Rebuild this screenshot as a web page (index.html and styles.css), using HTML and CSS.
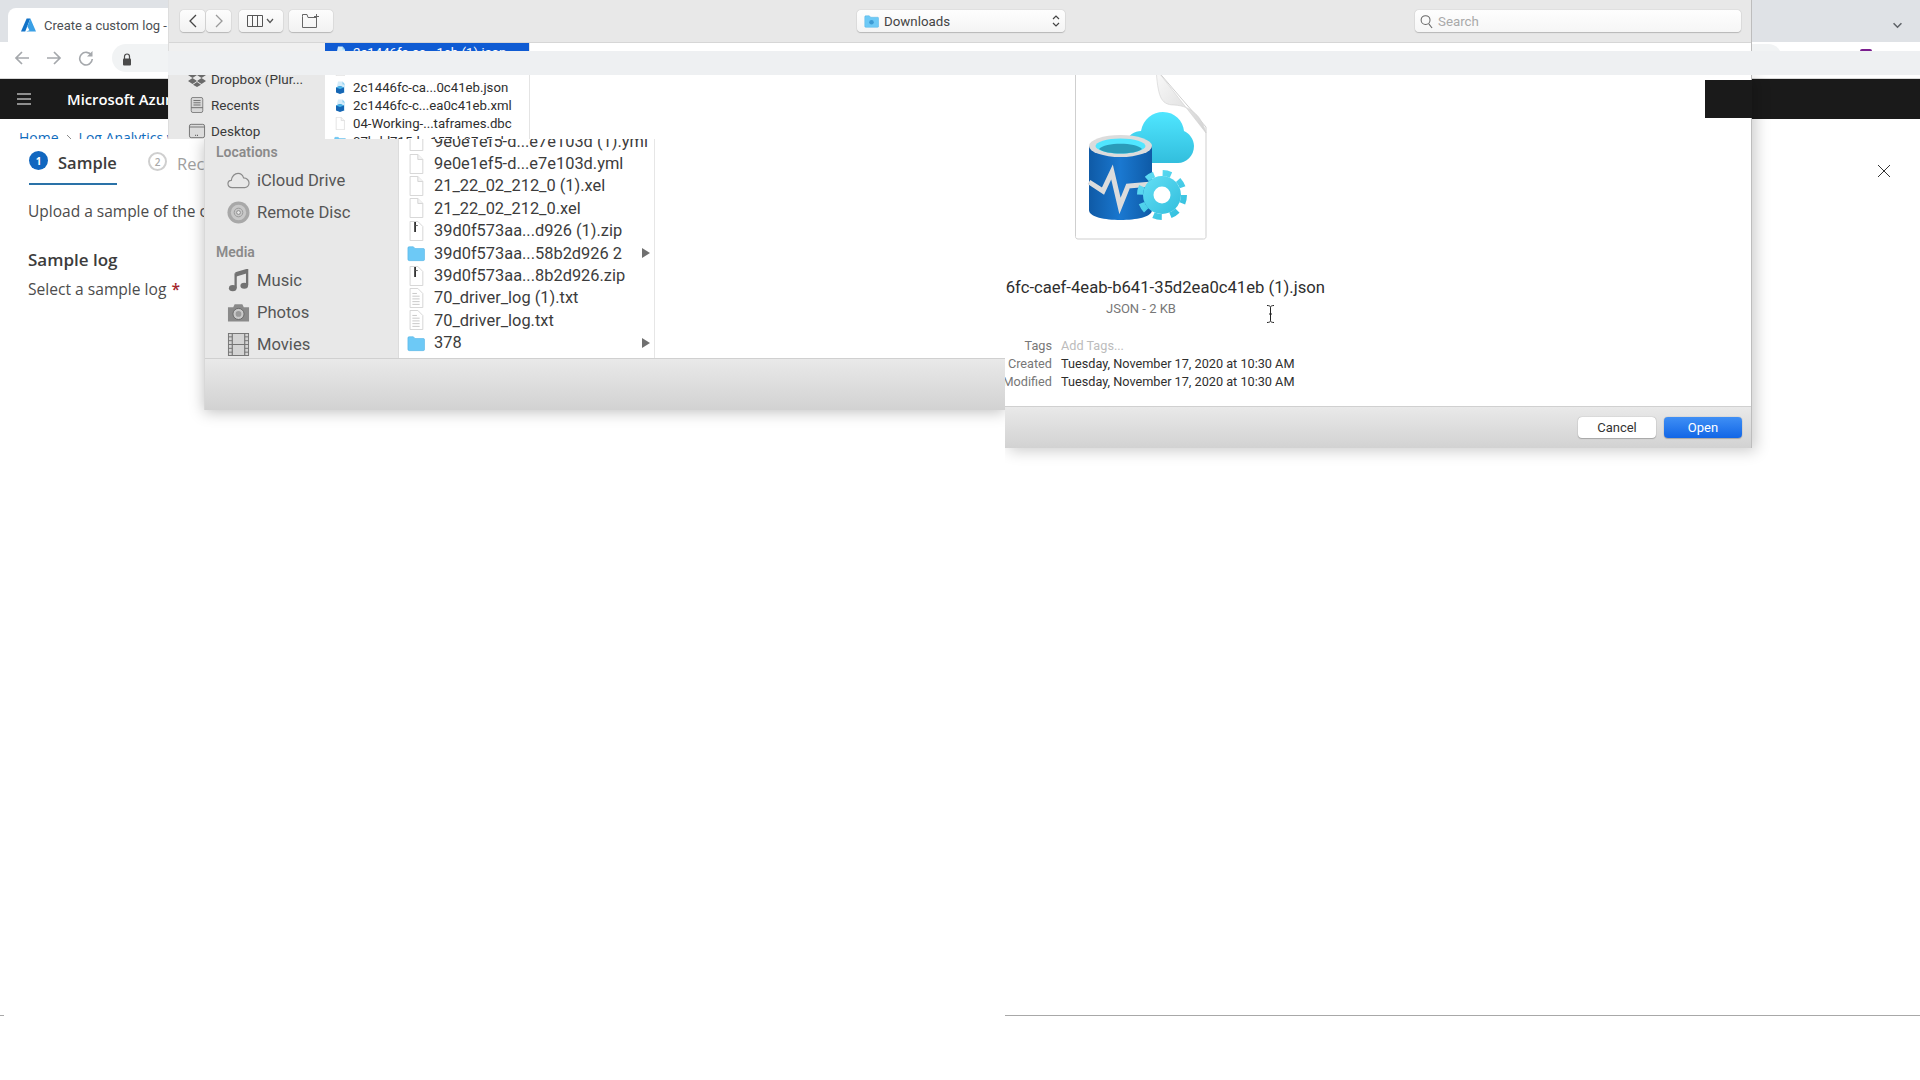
FILE: index.html
```html
<!DOCTYPE html>
<html lang="en">
<head>
<meta charset="utf-8">
<title>Create a custom log</title>
<link rel="stylesheet" href="styles.css">
</head>
<body>
<svg class="defs" width="0" height="0" aria-hidden="true">
  <defs>
    <symbol id="file" viewBox="0 0 18 22"><path d="M2.500 .5H11L16.500 6V21.500H2.500Z" fill="#fff" stroke="#d2d2d2"/><path d="M11 .5V6H16.500" fill="#f4f4f4" stroke="#d2d2d2"/></symbol>
    <symbol id="zip" viewBox="0 0 18 22"><path d="M2.500 .5H11L16.500 6V21.500H2.500Z" fill="#fff" stroke="#d2d2d2"/><path d="M8 1V12" stroke="#333" stroke-width="2"/><path d="M8 5H11" stroke="#555"/></symbol>
    <symbol id="txt" viewBox="0 0 18 22"><path d="M2.500 .5H11L16.500 6V21.500H2.500Z" fill="#fff" stroke="#d2d2d2"/><path d="M5 6H10M5 9H13M5 12H13M5 15H13M5 18H13" stroke="#c4c4c4"/></symbol>
    <symbol id="folder" viewBox="0 0 20 18"><path d="M1 3.500C1 2.500 1.500 2 2.500 2H7L9 4H18C19 4 19.500 4.500 19.500 5.500V16C19.500 17 19 17.500 18 17.500H2.500C1.500 17.500 1 17 1 16Z" fill="#6dc9f6" stroke="#4fb0e4" stroke-width=".6"/></symbol>
    <symbol id="json" viewBox="0 0 12 13"><path d="M4 .5H8.500L11 3.500V12H3V5Z" fill="#d4ecfa"/><path d="M2 6.500L6 5L10 6.500V11.500L6 13L2 11.500Z" fill="#1566b4"/><path d="M6 5L10 6.500L6 8L2 6.500Z" fill="#49b4e8"/><path d="M8.500 .5V3.500H11Z" fill="#8fd0f0"/></symbol>
    <symbol id="tri" viewBox="0 0 8 10"><path d="M0 0L8 5L0 10Z" fill="#707070"/></symbol>
  </defs>
</svg>

<main class="canvas">
  <div class="browser">
    <div class="tabstrip">
      <div class="tab">
        <svg class="azure" viewBox="0 0 16 14"><path d="M6 0H10L4.500 14H0Z" fill="#1273c8"/><path d="M10 0L16 14H5.500L9 12.500L6.800 8.500Z" fill="#3aa0e6"/></svg>
        <span>Create a custom log -</span>
      </div>
      <svg class="strip-chevron" viewBox="0 0 12 8"><path d="M1.500 1.500L6 6L10.500 1.500" fill="none" stroke="#5f6368" stroke-width="1.800"/></svg>
    </div>
    <div class="toolbar">
      <svg class="nav-ic" viewBox="0 0 16 16"><path d="M15 8H2M8 2L2 8L8 14" fill="none" stroke="#a5a8ac" stroke-width="1.700"/></svg>
      <svg class="nav-ic" viewBox="0 0 16 16"><path d="M1 8H14M8 2L14 8L8 14" fill="none" stroke="#a5a8ac" stroke-width="1.700"/></svg>
      <svg class="nav-ic" viewBox="0 0 16 16"><path d="M13.500 5.500A6.300 6.300 0 1 0 14.300 9" fill="none" stroke="#a5a8ac" stroke-width="1.600"/><path d="M14.500 1V6.500H9Z" fill="#a5a8ac"/></svg>
      <div class="pill">
        <svg class="lock" viewBox="0 0 10 13"><path d="M2.500 6V3.500A2.500 2.500 0 0 1 7.500 3.500V6" fill="none" stroke="#4a4a4a" stroke-width="1.200"/><rect x="1" y="5.500" width="8" height="7" rx="1" fill="#4a4a4a"/></svg>
      </div>
    </div>
    <div class="azure-nav">
      <div class="burger"><i></i><i></i><i></i></div>
      <span class="brand">Microsoft Azur</span>
    </div>
    <div class="crumbs"><span>Home</span><svg class="crumb-sep" viewBox="0 0 6 10"><path d="M1 1L5 5L1 9" fill="none" stroke="#8a8a8a"/></svg><span>Log Analytics w</span></div>
    <div class="steps">
      <div class="step step-on"><b>1</b><span>Sample</span></div>
      <div class="step step-off"><b>2</b><span>Rec</span></div>
    </div>
    <p class="intro">Upload a sample of the c</p>
    <h2 class="section">Sample log</h2>
    <p class="field">Select a sample log <span class="req">*</span></p>
  </div>

  <section class="win-top">
    <div class="fbar">
      <div class="btn-pair">
        <div class="fbtn"><svg viewBox="0 0 10 16"><path d="M8 2L2 8L8 14" fill="none" stroke="#444" stroke-width="1.300"/></svg></div>
        <div class="fbtn"><svg viewBox="0 0 10 16"><path d="M2 2L8 8L2 14" fill="none" stroke="#9a9a9a" stroke-width="1.300"/></svg></div>
      </div>
      <div class="fbtn fbtn-view">
        <svg viewBox="0 0 28 12"><path d="M.5 .5H15.500V11.500H.5ZM5.500 .5V11.500M10.500 .5V11.500" fill="none" stroke="#555"/><path d="M20 4L23 7.500L26 4" fill="none" stroke="#555" stroke-width="1.200"/></svg>
      </div>
      <div class="fbtn fbtn-new">
        <svg viewBox="0 0 18 14"><path d="M.5 2.500V13.500H14.500V3.500H6L5 .5H.5ZM14.500 0V5M12 2.500H17" fill="none" stroke="#666"/></svg>
      </div>
      <div class="popup">
        <svg class="pop-folder" viewBox="0 0 20 18"><use href="#folder"/><circle cx="10" cy="10.500" r="3" fill="#3d9bd4"/></svg>
        <span>Downloads</span>
        <svg class="pop-arrows" viewBox="0 0 8 14"><path d="M1 5L4 2L7 5M1 9L4 12L7 9" fill="none" stroke="#444" stroke-width="1.200"/></svg>
      </div>
      <div class="search">
        <svg viewBox="0 0 14 16"><circle cx="6" cy="6.500" r="4.800" fill="none" stroke="#666" stroke-width="1.100"/><path d="M9.500 10.500L13 15" stroke="#666" stroke-width="1.100"/></svg>
        <span>Search</span>
      </div>
    </div>
    <div class="top-body">
      <nav class="top-side">
        <div class="top-side-item">
          <svg viewBox="0 0 18 16"><path d="M4.500 1L9 4L4.500 7L0 4ZM13.500 1L18 4L13.500 7L9 4ZM4.500 7L9 10L4.500 13L0 10ZM13.500 7L18 10L13.500 13L9 10ZM9 11L13 13.700L9 16L5 13.700Z" fill="#6a6a6a"/></svg>
          <span>Dropbox (Plur...</span>
        </div>
        <div class="top-side-item">
          <svg viewBox="0 0 18 18"><rect x="2.500" y=".5" width="13" height="17" rx="2" fill="#d8d8d8" stroke="#777"/><path d="M5 4H13M5 6.500H13M5 9H13M2.500 12H15.500" stroke="#666"/></svg>
          <span>Recents</span>
        </div>
        <div class="top-side-item">
          <svg viewBox="0 0 18 18"><rect x=".5" y="1.500" width="17" height="15" rx="2" fill="#dcdcdc" stroke="#6a6a6a"/><path d="M.5 4.500H17.500" stroke="#6a6a6a"/><path d="M7 14H11" stroke="#555" stroke-dasharray="1 1" stroke-width="1.500"/></svg>
          <span>Desktop</span>
        </div>
      </nav>
      <div class="top-list">
        <div class="trow trow-sel"><svg><use href="#json"/></svg><span>2c1446fc-ca...1eb (1).json</span></div>
        <div class="trow"><svg><use href="#file"/></svg><span></span></div>
        <div class="trow"><svg><use href="#json"/></svg><span>2c1446fc-ca...0c41eb.json</span></div>
        <div class="trow"><svg><use href="#json"/></svg><span>2c1446fc-c...ea0c41eb.xml</span></div>
        <div class="trow"><svg><use href="#file"/></svg><span>04-Working-...taframes.dbc</span></div>
        <div class="trow"><svg><use href="#folder"/></svg><span>07bdd715d...157d-07c5-d</span></div>
      </div>
    </div>
  </section>

  <section class="win-low">
    <div class="low-body">
      <nav class="low-side">
        <h3>Locations</h3>
        <div class="side-item">
          <svg viewBox="0 0 24 18"><path d="M5.500 16.500C2.500 16.500 1 14.500 1 12.500C1 10.300 2.700 8.800 4.500 8.800C5 4.500 8.200 1.500 11.500 1.500C14.500 1.500 16.500 3.700 17.300 6.300C20.700 6.300 23 9 23 11.500C23 14.500 20.700 16.500 18.500 16.500Z" fill="none" stroke="#8a8a8a" stroke-width="1.200"/></svg>
          <span>iCloud Drive</span>
        </div>
        <div class="side-item">
          <svg viewBox="0 0 24 24"><circle cx="12" cy="12" r="11.500" fill="#a8a8a8"/><circle cx="12" cy="12" r="8" fill="#c8c8c8"/><circle cx="12" cy="12" r="4.500" fill="none" stroke="#999"/><circle cx="12" cy="12" r="2" fill="#e8e8e8" stroke="#8a8a8a"/></svg>
          <span>Remote Disc</span>
        </div>
        <h3 class="h-media">Media</h3>
        <div class="side-item">
          <svg viewBox="0 0 24 24"><path d="M9 4.500L21 1V17" fill="none" stroke="#737373" stroke-width="2.400"/><path d="M9 4.500V20" stroke="#737373" stroke-width="2.400"/><path d="M9 4V8L21 4.500V1Z" fill="#737373"/><ellipse cx="6" cy="20" rx="4" ry="3.200" fill="#737373"/><ellipse cx="18" cy="17.500" rx="4" ry="3.200" fill="#737373"/></svg>
          <span>Music</span>
        </div>
        <div class="side-item">
          <svg viewBox="0 0 24 20"><path d="M1 4.500H6.500L8 1.500H16L17.500 4.500H23V19.500H1Z" fill="#8a8a8a"/><circle cx="12" cy="11.500" r="5.800" fill="#c9c9c9" stroke="#6a6a6a"/><circle cx="12" cy="11.500" r="3" fill="#9a9a9a"/></svg>
          <span>Photos</span>
        </div>
        <div class="side-item">
          <svg viewBox="0 0 22 24"><rect x=".5" y=".5" width="21" height="23" fill="#d4d4d4" stroke="#747474"/><path d="M4.500 .5V23.500M17.500 .5V23.500M4.500 12H17.500" stroke="#747474" stroke-width="1.200"/><path d="M.5 4H4.500M.5 8H4.500M.5 12H4.500M.5 16H4.500M.5 20H4.500M17.500 4H21.500M17.500 8H21.500M17.500 12H21.500M17.500 16H21.500M17.500 20H21.500" stroke="#747474"/></svg>
          <span>Movies</span>
        </div>
      </nav>
      <div class="low-list">
        <div class="lrow"><svg><use href="#file"/></svg><span>9e0e1ef5-d...e7e103d (1).yml</span></div>
        <div class="lrow"><svg><use href="#file"/></svg><span>9e0e1ef5-d...e7e103d.yml</span></div>
        <div class="lrow"><svg><use href="#file"/></svg><span>21_22_02_212_0 (1).xel</span></div>
        <div class="lrow"><svg><use href="#file"/></svg><span>21_22_02_212_0.xel</span></div>
        <div class="lrow"><svg><use href="#zip"/></svg><span>39d0f573aa...d926 (1).zip</span></div>
        <div class="lrow"><svg><use href="#folder"/></svg><span>39d0f573aa...58b2d926 2</span><svg class="tri"><use href="#tri"/></svg></div>
        <div class="lrow"><svg><use href="#zip"/></svg><span>39d0f573aa...8b2d926.zip</span></div>
        <div class="lrow"><svg><use href="#txt"/></svg><span>70_driver_log (1).txt</span></div>
        <div class="lrow"><svg><use href="#txt"/></svg><span>70_driver_log.txt</span></div>
        <div class="lrow"><svg><use href="#folder"/></svg><span>378</span><svg class="tri"><use href="#tri"/></svg></div>
      </div>
      <div class="low-empty"></div>
    </div>
    <div class="low-foot"></div>
  </section>

  <section class="win-right">
    <div class="preview">
      <div class="preview-col">
        <svg class="doc" viewBox="0 0 134 165">
          <defs>
            <linearGradient id="gCloud" x1="0" y1="0" x2="0" y2="1"><stop offset="0" stop-color="#50e6ff"/><stop offset="1" stop-color="#32bedd"/></linearGradient>
            <linearGradient id="gCyl" x1="0" y1="0" x2="1" y2="0"><stop offset="0" stop-color="#0f5aa6"/><stop offset=".5" stop-color="#1a78d0"/><stop offset="1" stop-color="#0e5aa6"/></linearGradient>
            <linearGradient id="gFold" x1="0" y1="0" x2="1" y2="1"><stop offset="0" stop-color="#fafafa"/><stop offset="1" stop-color="#d2d2d2"/></linearGradient>
            <linearGradient id="gGear" x1="0" y1="0" x2="1" y2="1"><stop offset="0" stop-color="#63dff5"/><stop offset="1" stop-color="#32bedd"/></linearGradient>
          </defs>
          <path d="M1.500 -6H82L132 52V161.500C132 163 131 164 129.500 164H4C2.500 164 1.500 163 1.500 161.500Z" fill="#fff" stroke="#cfcfcf"/>
          <path d="M82 -6C84 20 86 30 100 30C118 31 128 42 132 58Z" fill="url(#gFold)" stroke="#d0d0d0" stroke-width=".6"/>
          <path d="M53 68C53 60 61 56 67 56C69 44 79 37 89 37C101 37 109 46 110 56C115 58 120 64 120 71C120 81 112 88 104 88H61Z" fill="url(#gCloud)"/>
          <path d="M15 71V135C15 142 31 145 46.500 145C62 145 78 142 78 135V71Z" fill="url(#gCyl)"/>
          <path d="M15 107L29 116L38 97L46 131L54 111L78 109" fill="none" stroke="#dcdcdc" stroke-width="5"/>
          <ellipse cx="46.500" cy="71" rx="31.500" ry="11" fill="#dcdcdc"/>
          <ellipse cx="46.500" cy="71" rx="25" ry="7.500" fill="#50e6ff"/>
          <path d="M25 74C31 67 62 67 68 74C61 80 32 80 25 74Z" fill="#2a9cba"/>
          <circle cx="88" cy="120" r="19" fill="url(#gGear)"/>
          <circle cx="88" cy="120" r="22" fill="none" stroke="url(#gGear)" stroke-width="6" stroke-dasharray="8.500 8.780"/>
          <circle cx="88" cy="120" r="8.500" fill="#fff"/>
        </svg>
        <div class="fname"><span>6fc-caef-4eab-b641-35d2ea0c41eb (1).json</span></div>
        <div class="fkind">JSON - 2 KB</div>
        <dl class="meta">
          <dt>Tags</dt><dd class="placeholder">Add Tags...</dd>
          <dt>Created</dt><dd>Tuesday, November 17, 2020 at 10:30 AM</dd>
          <dt>Modified</dt><dd>Tuesday, November 17, 2020 at 10:30 AM</dd>
        </dl>
      </div>
    </div>
    <div class="right-foot">
      <button class="mac-btn">Cancel</button>
      <button class="mac-btn mac-primary">Open</button>
    </div>
  </section>

  <div class="band"></div>
  <div class="avatar"></div>
  <div class="nav-piece"></div>
  <svg class="close" viewBox="0 0 14 14"><path d="M1 1L13 13M13 1L1 13" stroke="#333" stroke-width="1"/></svg>
  <svg class="ibeam" viewBox="0 0 9 18"><path d="M1 .5C3 .5 4.500 1 4.500 2.500V15.500C4.500 17 3 17.500 1 17.500M8 .5C6 .5 4.500 1 4.500 2.500M8 17.500C6 17.500 4.500 17 4.500 15.500" fill="none" stroke="#222"/><path d="M3 9H6" stroke="#222"/></svg>
  <div class="rule rule-left"></div>
  <div class="rule rule-right"></div>
</main>
</body>
</html>
```
FILE: styles.css
```css
* { box-sizing: border-box; }
html, body { margin: 0; padding: 0; background: #fff; }
.defs { position: absolute; }
.canvas {
  position: relative;
  width: 1920px;
  height: 1080px;
  overflow: hidden;
  background: #fff;
  font-family: "Roboto", "Liberation Sans", sans-serif;
}
svg { display: block; flex: none; }

/* Browser underneath */
.browser { display: flex; flex-direction: column; font-family: "Open Sans", "Liberation Sans", sans-serif; }
.tabstrip { height: 42px; background: #dfe2e6; display: flex; align-items: flex-end; padding-left: 8px; position: relative; }
.tab { width: 170px; height: 34px; background: #fff; border-radius: 8px 8px 0 0; display: flex; align-items: center; gap: 8px; padding: 0 0 0 13px; font: 13px "Roboto", sans-serif; color: #4c4f53; white-space: nowrap; overflow: hidden; }
.azure { width: 15px; height: 14px; }
.strip-chevron { width: 11px; height: 7px; position: absolute; right: 17px; top: 22px; }
.toolbar { height: 37px; background: #fff; display: flex; align-items: center; padding-left: 14px; gap: 16px; border-bottom: 1px solid #d8d8d8; }
.nav-ic { width: 16px; height: 16px; margin-top: -4px; }
.pill { width: 1670px; height: 28px; margin: -4px 0 0 2px; border-radius: 14px; background: #f1f3f4; padding: 2px 0 0 10px; display: flex; align-items: center; }
.lock { width: 10px; height: 13px; }
.azure-nav { height: 40px; background: #1a1a1a; display: flex; align-items: center; padding-left: 17px; gap: 36px; color: #fff; white-space: nowrap; }
.burger { width: 14px; display: flex; flex-direction: column; gap: 3px; }
.burger i { height: 2px; background: #8e8e8e; display: block; }
.brand { font-size: 14.800px; font-weight: 600; }
.crumbs { height: 20px; overflow: hidden; padding: 9px 0 0 19px; display: flex; gap: 7px; color: #0f6cbd; font-size: 14px; line-height: 20px; white-space: nowrap; align-items: flex-start; }
.crumb-sep { width: 6px; height: 10px; margin-top: 6px; }
.steps { height: 46px; display: flex; padding-left: 29px; gap: 31px; white-space: nowrap; }
.step { display: flex; align-items: center; gap: 10px; height: 46px; padding-top: 2px; font-size: 16.500px; }
.step b { width: 19px; height: 19px; border-radius: 50%; font-size: 10px; display: flex; align-items: center; justify-content: center; font-weight: 700; margin-top: -3px; }
.step-on { border-bottom: 2px solid #2a72a8; color: #3c3c3c; font-weight: 600; width: 88px; }
.step-on b { background: #1167c0; color: #fff; }
.step-off { color: #a0a0a0; padding-left: 0; }
.step-off b { border: 2px solid #cfcfcf; color: #a8a8a8; background: #fff; font-weight: 600; }
.intro { margin: 15px 0 0 28px; font-size: 15.500px; line-height: 22px; color: #4c4c4c; white-space: nowrap; }
.section { margin: 25px 0 0 28px; font-size: 17px; line-height: 26px; font-weight: 600; color: #3c3c3c; }
.field { margin: 5px 0 0 28px; font-size: 15.600px; line-height: 22px; color: #4c4c4c; }
.req { color: #a4262c; font-weight: 600; margin-left: 1px; }

/* Finder top slice */
.win-top { position: absolute; left: 168px; top: 0; width: 1584px; height: 139px; background: #fff; border-right: 1px solid #bdbdbd; border-left: 1px solid #ddd; overflow: hidden; display: flex; flex-direction: column; }
.fbar { height: 43px; background: #e8e8e8; border-bottom: 1px solid #d6d6d6; display: flex; align-items: center; padding-left: 11px; position: relative; flex: none; }
.btn-pair { display: flex; gap: 1px; margin-right: 8px; }
.fbtn { height: 22px; width: 25px; background: linear-gradient(#fdfdfd, #f2f2f2); border-radius: 4px; box-shadow: 0 0 1px #999, 0 1px 1px #bbb; display: flex; align-items: center; justify-content: center; }
.fbtn svg { width: 10px; height: 16px; }
.fbtn-view { width: 44px; margin-right: 6px; }
.fbtn-view svg { width: 28px; height: 12px; }
.fbtn-new { width: 44px; }
.fbtn-new svg { width: 18px; height: 14px; }
.popup { width: 208px; height: 22px; margin-left: 524px; background: linear-gradient(#fefefe, #f4f4f4); border-radius: 4px; box-shadow: 0 0 1px #999, 0 1px 1px #bbb; display: flex; align-items: center; padding: 0 5px 0 7px; gap: 5px; font-size: 13.300px; color: #444; }
.pop-folder { width: 15px; height: 14px; }
.pop-arrows { width: 8px; height: 14px; margin-left: auto; }
.search { width: 326px; height: 22px; margin-left: 350px; background: linear-gradient(#fefefe, #f6f6f6); border-radius: 4px; box-shadow: 0 0 1px #999, 0 1px 1px #bbb; display: flex; align-items: center; padding-left: 5px; gap: 5px; font-size: 13.300px; color: #a9a9a9; }
.search svg { width: 13px; height: 15px; }
.top-body { display: flex; flex: 1; min-height: 0; }
.top-side { width: 156px; background: linear-gradient(#f0f0f0 8px, #e8e8e8 8px); padding: 23px 0 0 19px; flex: none; }
.top-side-item { height: 26px; display: flex; align-items: center; gap: 5px; font-size: 13.500px; color: #3a3a3a; white-space: nowrap; }
.top-side-item svg { width: 18px; height: 16px; }
.top-list { width: 205px; border-right: 1px solid #e4e4e4; flex: none; font-size: 13.200px; color: #2e2e2e; }
.trow { height: 18px; display: flex; align-items: center; padding-left: 9px; gap: 7px; white-space: nowrap; overflow: hidden; position: relative; top: -1px; }
.trow svg { width: 12px; height: 13px; }
.trow-sel { background: #0f5bd3; color: #fff; top: 0; }

/* Finder lower slice */
.win-low { position: absolute; left: 204px; top: 139px; width: 801px; height: 271px; display: flex; flex-direction: column; background: #fff; box-shadow: 0 2px 14px rgba(0,0,0,.25); clip-path: inset(0 0 -30px -30px); border-left: 1px solid #d8d8d8; }
.low-body { display: flex; height: 219px; overflow: hidden; }
.low-side { width: 194px; background: #e8e8e8; flex: none; padding: 3px 0 0 11px; border-right: 1px solid #dcdcdc; }
.low-side h3 { margin: 0 0 2px; height: 20px; font-size: 14px; line-height: 20px; font-weight: 600; color: #8a8a8a; }
.low-side .h-media { margin-top: 14px; }
.side-item { height: 32px; display: flex; align-items: center; gap: 7px; padding-left: 11px; font-size: 16.600px; color: #565656; white-space: nowrap; }
.side-item svg { width: 23px; height: 23px; }
.low-list { width: 256px; border-right: 1px solid #e6e6e6; flex: none; font-size: 16.400px; color: #3c3c3c; margin-top: -9px; }
.lrow { height: 22.400px; display: flex; align-items: center; padding-left: 8px; gap: 9px; white-space: nowrap; }
.lrow svg { width: 18px; height: 20px; }
.lrow .tri { width: 8px; height: 10px; margin-left: auto; margin-right: 4px; }
.low-empty { flex: 1; }
.low-foot { flex: 1; background: linear-gradient(#e9e9e9, #d2d2d2); border-top: 1px solid #d0d0d0; }

/* Finder right slice */
.win-right { position: absolute; left: 1005px; top: 75px; width: 747px; height: 373px; background: #fff; display: flex; flex-direction: column; border-right: 1px solid #bdbdbd; box-shadow: 4px 3px 14px rgba(0,0,0,.2); clip-path: inset(0 -30px -30px 0); }
.preview { flex: 1; min-height: 0; overflow: hidden; }
.preview-col { width: 272px; display: flex; flex-direction: column; align-items: center; }
.doc { width: 134px; height: 165px; overflow: hidden; }
.fname { align-self: flex-start; width: 320px; margin-top: 38px; height: 20px; display: flex; justify-content: flex-end; font-size: 16.650px; line-height: 20px; color: #2e2e2e; white-space: nowrap; overflow: hidden; }
.fkind { margin-top: 3px; font-size: 13px; line-height: 16px; color: #777; }
.meta { align-self: flex-start; margin: 20px 0 0; display: grid; grid-template-columns: 47px auto; column-gap: 9px; font-size: 12.700px; line-height: 18px; white-space: nowrap; }
.meta dt { color: #777; display: flex; justify-content: flex-end; overflow: hidden; }
.meta dd { margin: 0; color: #2e2e2e; }
.meta .placeholder { color: #bcbcbc; }
.right-foot { height: 42px; flex: none; background: linear-gradient(#e9e9e9, #d2d2d2); border-top: 1px solid #d0d0d0; display: flex; align-items: center; justify-content: flex-end; gap: 8px; padding-right: 9px; }
.mac-btn { width: 78px; height: 21px; padding: 0; border: 0; border-radius: 4px; background: #fff; box-shadow: 0 0 1px #888, 0 1px 1px #aaa; font: 13px "Roboto", sans-serif; color: #333; }
.mac-primary { background: linear-gradient(#3f8ff5, #1266e6); color: #fff; }

/* Glitch overlays */
.band { position: absolute; left: 168px; top: 51px; width: 1752px; height: 24px; background: #eef0f2; }
.avatar { position: absolute; left: 1860px; top: 49px; width: 12px; height: 2px; background: #7a1e8e; border-radius: 6px 6px 0 0; }
.nav-piece { position: absolute; left: 1705px; top: 80px; width: 47px; height: 38px; background: #1a1a1a; }
.close { position: absolute; left: 1877px; top: 164px; width: 14px; height: 14px; }
.ibeam { position: absolute; left: 1266px; top: 305px; width: 9px; height: 18px; }
.rule { position: absolute; top: 1015px; height: 1px; background: #a8a8a8; }
.rule-left { left: 0; width: 4px; }
.rule-right { left: 1005px; right: 0; }
```
